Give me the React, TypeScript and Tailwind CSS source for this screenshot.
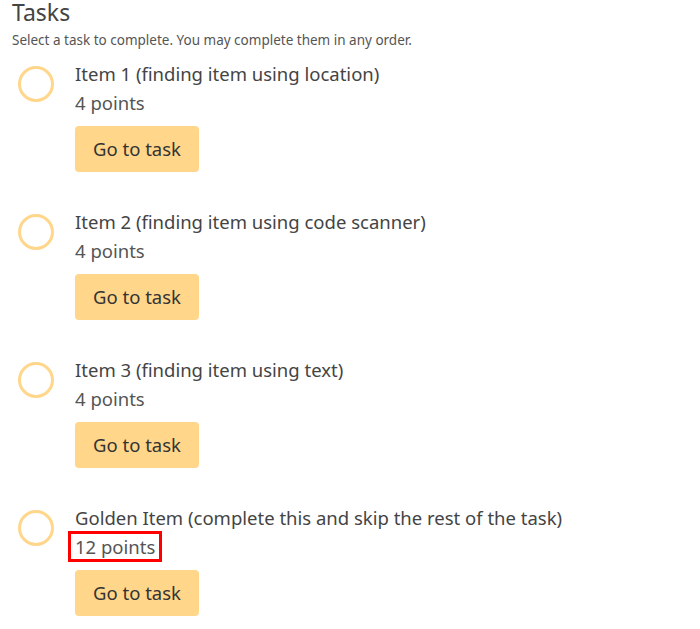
import React from "react";

type Task = {
  title: string;
  points: number;
  highlight?: boolean;
};

const tasks: Task[] = [
  { title: "Item 1 (finding item using location)", points: 4 },
  { title: "Item 2 (finding item using code scanner)", points: 4 },
  { title: "Item 3 (finding item using text)", points: 4 },
  { title: "Golden Item (complete this and skip the rest of the task)", points: 12, highlight: true },
];

function TaskRow({ task }: { task: Task }) {
  return (
    <li className="flex">
      <div className="w-[63px] shrink-0 pl-[6px] pt-[4px]">
        <div className="h-[36px] w-[36px] rounded-full border-[3px] border-[#ffd68a]" />
      </div>
      <div className="flex flex-col items-start">
        <div className="text-[18.5px] leading-[24px] text-[#444]">{task.title}</div>
        <div className="relative mt-[5px] text-[18.5px] leading-[24px] text-[#555]">
          {task.points} points
          {task.highlight && (
            <div className="absolute left-[-7px] top-[-4px] h-[31px] w-[94px] border-[3px] border-[#ff0000]" />
          )}
        </div>
        <button className="mt-[11px] h-[46px] w-[124px] rounded-[4px] bg-[#ffd68a] text-[18.5px] text-[#333]">
          Go to task
        </button>
      </div>
    </li>
  );
}

export default function App() {
  return (
    <div className="h-[629px] w-[700px] overflow-hidden bg-white pl-[12px]" style={{ fontFamily: '"Noto Sans", sans-serif' }}>
      <h1 className="text-[23px] leading-[24px] text-[#444]">Tasks</h1>
      <p className="mt-[7px] text-[13.5px] leading-[18px] text-[#555]">
        Select a task to complete. You may complete them in any order.
      </p>
      <ul className="mt-[13px] flex flex-col gap-[38px]">
        {tasks.map((t) => (
          <TaskRow key={t.title} task={t} />
        ))}
      </ul>
    </div>
  );
}
